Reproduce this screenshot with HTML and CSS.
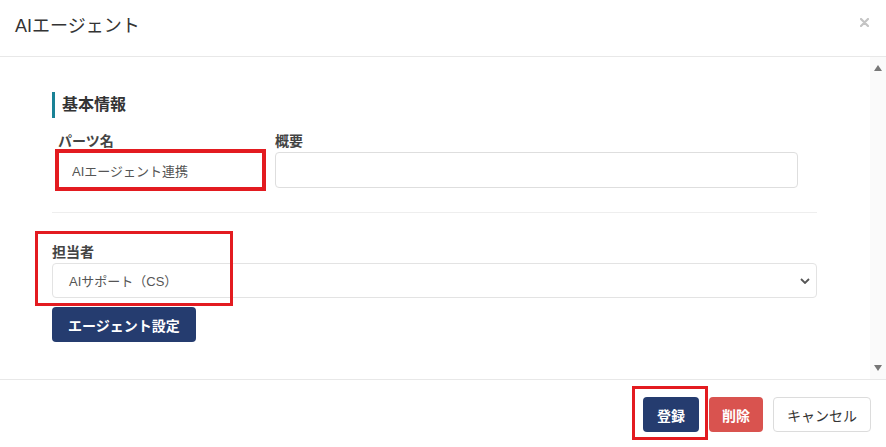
FILE: index.html
```html
<!DOCTYPE html>
<html>
  <head>
    <title>AIエージェント</title>
    <link rel="stylesheet" href="styles.css">
  </head>
  <body>
    <div class="modal">
      <div class="modal-header">
        <h1>AIエージェント</h1>
        <button class="close" type="button">
          <svg width="9" height="9" viewBox="0 0 9 9">
            <path d="M1 1 L8 8 M8 1 L1 8" stroke="#c4c4c4" stroke-width="2.2" stroke-linecap="round"/>
          </svg>
        </button>
      </div>

      <div class="modal-body">
        <div class="body-content">
          <h2 class="section-title">基本情報</h2>
          <div class="field-row">
            <div class="form-group">
              <label for="parts_name">パーツ名</label>
              <input class="marked" type="text" id="parts_name" value="AIエージェント連携">
            </div>
            <div class="form-group">
              <label for="summary">概要</label>
              <input type="text" id="summary" value="">
            </div>
          </div>
          <hr>
          <div class="form-group assignee">
            <label for="tantou">担当者</label>
            <div class="select" id="tantou">
              <span>AIサポート（CS）</span>
              <svg width="10" height="6" viewBox="0 0 10 6">
                <path d="M1 1 L5 5 L9 1" fill="none" stroke="#555" stroke-width="1.8"/>
              </svg>
            </div>
            <div class="mark-box"></div>
          </div>
          <button class="btn btn-navy" type="button">エージェント設定</button>
        </div>
        <div class="scrollbar">
          <svg width="8" height="6" viewBox="0 0 8 6"><path d="M4 0 L8 6 L0 6 Z" fill="#777"/></svg>
          <svg width="8" height="6" viewBox="0 0 8 6"><path d="M0 0 L8 0 L4 6 Z" fill="#777"/></svg>
        </div>
      </div>

      <div class="modal-footer">
        <span class="mark-wrap">
          <button class="btn btn-navy" type="button">登録</button>
        </span>
        <button class="btn btn-red" type="button">削除</button>
        <button class="btn btn-white" type="button">キャンセル</button>
      </div>
    </div>
  </body>
</html>
```

FILE: styles.css
```css
body {
  font-family: "Liberation Sans", "Noto Sans CJK JP", sans-serif;
  margin: 0;
  padding: 0;
  background-color: white;
  color: #333;
}

.modal {
  width: 886px;
  height: 447px;
  display: flex;
  flex-direction: column;
}

.modal-header {
  height: 56px;
  border-bottom: 1px solid #e8e8e8;
  display: flex;
  justify-content: space-between;
  align-items: flex-start;
  padding: 0 17px 0 15px;
}

.modal-header h1 {
  margin: 14px 0 0;
  font-size: 18px;
  font-weight: normal;
  line-height: 24px;
  color: #333;
}

.close {
  margin-top: 18px;
  padding: 0;
  border: none;
  background: none;
  line-height: 0;
}

.modal-body {
  height: 322px;
  display: flex;
  border-bottom: 1px solid #e8e8e8;
}

.body-content {
  flex: 1;
  padding: 35px 53px 0 52px;
}

.scrollbar {
  width: 16px;
  background-color: #fafafa;
  display: flex;
  flex-direction: column;
  justify-content: space-between;
  align-items: center;
  padding: 8px 0 8px;
}

.section-title {
  margin: 0 0 13px;
  font-size: 16px;
  line-height: 26px;
  font-weight: bold;
  color: #333;
  border-left: 3px solid #1a8296;
  padding-left: 7px;
}

.field-row {
  display: grid;
  grid-template-columns: 205px 523px;
  column-gap: 12px;
  margin-left: 6px;
}

.form-group label {
  display: block;
  font-size: 14px;
  line-height: 20px;
  font-weight: bold;
  color: #444;
  margin-bottom: 1px;
}

.form-group input[type="text"] {
  box-sizing: border-box;
  width: 100%;
  height: 36px;
  padding: 0 13px;
  border: 1px solid #dedede;
  border-radius: 4px;
  font-family: inherit;
  font-size: 13px;
  color: #555;
}

.form-group input.marked {
  outline: 3px solid #e31b20;
  border-color: #e31b20;
  border-radius: 0;
}

hr {
  border: none;
  border-top: 1px solid #eeeeee;
  margin: 24px 0 29px;
}

.assignee {
  position: relative;
}

.select {
  box-sizing: border-box;
  height: 35px;
  border: 1px solid #e3e3e3;
  border-radius: 4px;
  display: flex;
  justify-content: space-between;
  align-items: center;
  padding: 0 6px 0 16px;
  font-size: 13px;
  color: #555;
}

/* 注目枠 */
.mark-box {
  position: absolute;
  left: -17px;
  top: -11px;
  width: 198px;
  height: 75px;
  box-sizing: border-box;
  border: 3px solid #e31b20;
  pointer-events: none;
}

.btn {
  box-sizing: border-box;
  height: 35px;
  padding: 0 14px;
  border: 1px solid transparent;
  border-radius: 4px;
  font-family: inherit;
  font-size: 14px;
  white-space: nowrap;
  cursor: pointer;
}

.btn-navy {
  background-color: #253c6f;
  color: white;
  font-weight: bold;
}

.body-content .btn-navy {
  margin-top: 9px;
  padding: 0 15px;
}

.modal-footer .btn-navy {
  padding: 0 13px;
}

.btn-red {
  background-color: #d9534f;
  color: white;
  font-weight: bold;
  margin: 17px 0 0 1px;
  padding: 0 12px;
}

.btn-white {
  background-color: white;
  border-color: #dcdcdc;
  color: #333;
  margin: 17px 0 0 10px;
  padding: 0 13px;
}

.modal-footer {
  flex: 1;
  display: flex;
  justify-content: flex-end;
  align-items: flex-start;
  padding: 0 15px 0 0;
}

.mark-wrap {
  display: block;
  margin-top: 6px;
  padding: 8px 6px 5px 8px;
  border: 3px solid #e31b20;
}

.mark-wrap .btn {
  display: block;
}
```
